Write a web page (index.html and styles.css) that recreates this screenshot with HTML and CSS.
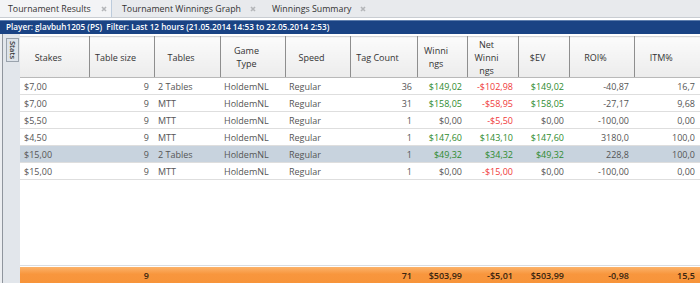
FILE: index.html
```html
<!DOCTYPE html>
<html>
<head>
<meta charset="utf-8">
<link rel="stylesheet" href="styles.css">
</head>
<body>
<div class="tabs">
  <div class="tab active"><span class="tab-label">Tournament Results</span><svg class="x" viewBox="0 0 6 6"><path d="M1 1L5 5M5 1L1 5"/></svg></div>
  <div class="tab t2"><span class="tab-label">Tournament Winnings Graph</span><svg class="x" viewBox="0 0 6 6"><path d="M1 1L5 5M5 1L1 5"/></svg></div>
  <div class="tab t3"><span class="tab-label">Winnings Summary</span><svg class="x" viewBox="0 0 6 6"><path d="M1 1L5 5M5 1L1 5"/></svg></div>
</div>
<div class="filterbar">Player: glavbuh1205 (PS)&nbsp;&nbsp;Filter: Last 12 hours (21.05.2014 14:53 to 22.05.2014 2:53)</div>
<div class="main">
  <div class="side"><div class="stats-btn">Stats</div></div>
  <div class="grid">
    <table class="tbl">
      <colgroup>
        <col class="c69"><col class="c65"><col class="c66"><col class="c65"><col class="c65"><col class="c67"><col class="c50"><col class="c51"><col class="c51"><col class="c65"><col class="c66">
      </colgroup>
      <thead>
        <tr>
          <th>Stakes</th><th>Table size</th><th>Tables</th><th>Game<br>Type</th><th>Speed</th><th>Tag Count</th><th>Winni<br>ngs</th><th>Net<br>Winni<br>ngs</th><th>$EV</th><th>ROI%</th><th>ITM%</th>
        </tr>
      </thead>
      <tbody>
        <tr><td>$7,00</td><td class="r">9</td><td>2 Tables</td><td>HoldemNL</td><td>Regular</td><td class="r">36</td><td class="r g">$149,02</td><td class="r n">-$102,98</td><td class="r g">$149,02</td><td class="r">-40,87</td><td class="r">16,7</td></tr>
        <tr><td>$7,00</td><td class="r">9</td><td>MTT</td><td>HoldemNL</td><td>Regular</td><td class="r">31</td><td class="r g">$158,05</td><td class="r n">-$58,95</td><td class="r g">$158,05</td><td class="r">-27,17</td><td class="r">9,68</td></tr>
        <tr><td>$5,50</td><td class="r">9</td><td>MTT</td><td>HoldemNL</td><td>Regular</td><td class="r">1</td><td class="r">$0,00</td><td class="r n">-$5,50</td><td class="r">$0,00</td><td class="r">-100,00</td><td class="r">0,00</td></tr>
        <tr><td>$4,50</td><td class="r">9</td><td>MTT</td><td>HoldemNL</td><td>Regular</td><td class="r">1</td><td class="r g">$147,60</td><td class="r g">$143,10</td><td class="r g">$147,60</td><td class="r">3180,0</td><td class="r">100,0</td></tr>
        <tr class="sel"><td>$15,00</td><td class="r">9</td><td>2 Tables</td><td>HoldemNL</td><td>Regular</td><td class="r">1</td><td class="r g">$49,32</td><td class="r g">$34,32</td><td class="r g">$49,32</td><td class="r">228,8</td><td class="r">100,0</td></tr>
        <tr><td>$15,00</td><td class="r">9</td><td>MTT</td><td>HoldemNL</td><td>Regular</td><td class="r">1</td><td class="r">$0,00</td><td class="r n">-$15,00</td><td class="r">$0,00</td><td class="r">-100,00</td><td class="r">0,00</td></tr>
      </tbody>
    </table>
    <div class="filler"></div>
    <table class="tbl foot">
      <colgroup>
        <col class="c69"><col class="c65"><col class="c66"><col class="c65"><col class="c65"><col class="c67"><col class="c50"><col class="c51"><col class="c51"><col class="c65"><col class="c66">
      </colgroup>
      <tr><td></td><td class="r">9</td><td></td><td></td><td></td><td class="r">71</td><td class="r">$503,99</td><td class="r">-$5,01</td><td class="r">$503,99</td><td class="r">-0,98</td><td class="r">15,5</td></tr>
    </table>
  </div>
</div>
</body>
</html>
```
FILE: styles.css
```css
* { box-sizing: border-box; }
html, body { margin: 0; padding: 0; }
body {
  width: 700px;
  height: 283px;
  overflow: hidden;
  background: #ffffff;
  font-family: "Open Sans", "Noto Sans", sans-serif;
  display: flex;
  flex-direction: column;
}
.tabs {
  height: 18px;
  display: flex;
  background: #e8eaed;
  border-bottom: 1px solid #c9cdd2;
  flex: none;
}
.tab {
  display: flex;
  align-items: center;
  flex: none;
  padding-left: 10px;
  font-size: 8.8px;
  color: #333;
  white-space: nowrap;
}
.tab.active {
  background: #f3f4f6;
  padding-left: 8px;
  width: 112px;
  border-right: 1px solid #bccbdc;
}
.tab.active .x { margin-right: 4px; }
.t2 { width: 150px; }
.t3 { width: 110px; }
.tab-label { flex: 1; }
.x {
  width: 6px;
  height: 6px;
  margin-right: 6px;
  stroke: #b4b6b9;
  stroke-width: 1.6;
  fill: none;
  flex: none;
}
.filterbar {
  margin-top: 2px;
  height: 14px;
  background: #1a4384;
  border-top: 1px solid #5f7fae;
  color: #ffffff;
  font-size: 8.2px;
  font-weight: 600;
  line-height: 12px;
  padding-left: 6px;
  white-space: nowrap;
  flex: none;
}
.main {
  flex: 1;
  display: flex;
  min-height: 0;
}
.side {
  width: 20px;
  flex: none;
  background: linear-gradient(to right, #eceef1 0, #eceef1 2px, #8f959d 2px, #8f959d 3px, #e2e6eb 3px);
  padding: 4px 0 0 6px;
}
.stats-btn {
  width: 13px;
  height: 24px;
  border: 1px solid #9aa3ad;
  background: #dde3ea;
  writing-mode: vertical-rl;
  font-size: 7.5px;
  font-weight: 600;
  color: #333;
  line-height: 11px;
  text-align: center;
}
.grid {
  flex: 1;
  display: flex;
  flex-direction: column;
  padding-top: 2px;
  min-width: 0;
}
.tbl {
  border-collapse: collapse;
  table-layout: fixed;
  width: 680px;
  font-size: 9px;
  flex: none;
}
.c69 { width: 69px; }
.c65 { width: 65px; }
.c66 { width: 66px; }
.c67 { width: 67px; }
.c50 { width: 50px; }
.c51 { width: 51px; }
.tbl th {
  height: 41px;
  font-weight: 400;
  color: #333;
  text-align: center;
  padding: 0 14px 0 2px;
  line-height: 13px;
  background: linear-gradient(to bottom, #fbfbfb, #ececec);
  border-top: 1px solid #d6d6d6;
  border-bottom: 1px solid #b9b9b9;
  border-right: 1px solid #8e8e8e;
  white-space: nowrap;
}
.tbl th:last-child { border-right: none; }
.tbl td {
  height: 17px;
  padding: 0 5px 0 4px;
  color: #555;
  border-bottom: 1px solid #dedede;
  white-space: nowrap;
  overflow: hidden;
}
.tbl td.r { text-align: right; }
.tbl td.g { color: #2e8b2e; }
.tbl td.n { color: #f03a3a; }
.tbl tr.sel td { background: #c8d3de; }
.filler {
  flex: 1;
  border-bottom: 1px solid #d9dde2;
}
.foot {
  margin-top: 1px;
}
.foot td {
  height: 16px;
  background: linear-gradient(to bottom, #fbb26a, #f8963d 45%, #f7943a);
  color: #3a2510;
  font-weight: 600;
  border-bottom: none;
}
```
